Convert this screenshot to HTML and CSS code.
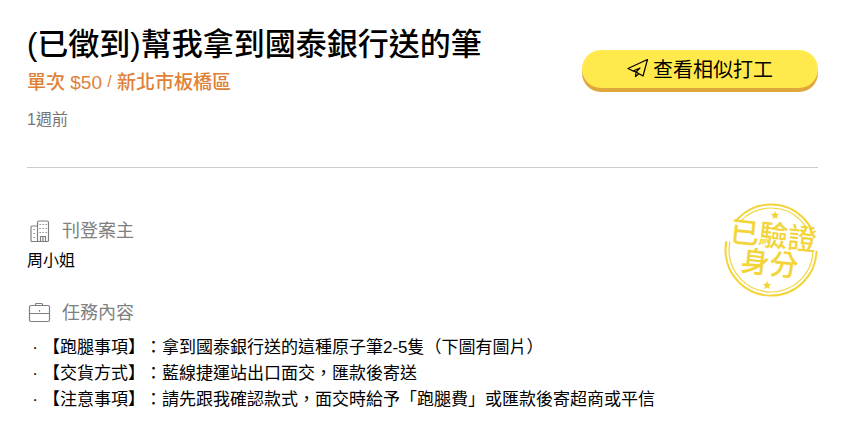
FILE: index.html
```html
<!DOCTYPE html>
<html lang="zh-Hant">
<head>
    <meta charset="UTF-8">
    <meta name="viewport" content="width=device-width, initial-scale=1.0">
    <title>幫我拿到國泰銀行送的筆</title>
    <link rel="stylesheet" href="styles.css">
</head>
<body>
    <main class="job">
        <header class="job-header">
            <div class="job-info">
                <h1>(已徵到)幫我拿到國泰銀行送的筆</h1>
                <p class="job-meta">單次 $50 <span class="slash">/</span> 新北市板橋區</p>
                <p class="job-time">1週前</p>
            </div>
            <button type="button" class="similar-btn">
                <svg width="22" height="20" viewBox="0 0 22 20" fill="none" stroke="currentColor" stroke-width="1.2" stroke-linejoin="round">
                    <path d="M20.500 1.500 1 10.500l5 2.500 7-3-4 4 7 4zM6 13l3 1-.5 4.500 3-2.500"/>
                </svg>
                查看相似打工
            </button>
        </header>

        <div class="job-body">
            <div class="sections">
                <section>
                    <h2>
                        <svg width="24" height="24" viewBox="0 0 24 24" fill="none" stroke="currentColor" stroke-width="1.2">
                            <path d="M10.500 22.500H5a1 1 0 0 1-1-1V8a1 1 0 0 1 1-1h5.500M10.500 22.500V3.500a1.500 1.500 0 0 1 1.500-1.500h8a1.500 1.500 0 0 1 1.500 1.500v18a1 1 0 0 1-1 1zM13.500 22.500v-5h5v5M16 17.500v5"/>
                            <path d="M12.500 5.500h1.300M15.500 5.500h1.300M18.500 5.500h1.300M12.500 9.500h1.300M15.500 9.500h1.300M18.500 9.500h1.300M12.500 13.500h1.300M15.500 13.500h1.300M18.500 13.500h1.300M6.500 10.500h1.300M6.500 14.500h1.300M6.500 18.500h1.300"/>
                        </svg>
                        刊登案主
                    </h2>
                    <p class="owner">周小姐</p>
                </section>
                <section>
                    <h2>
                        <svg width="24" height="24" viewBox="0 0 24 24" fill="none" stroke="currentColor" stroke-width="1.2">
                            <rect x="2.500" y="4.500" width="20" height="16" rx="1.500"/>
                            <path d="M8.500 4.500V3.500a1 1 0 0 1 1-1h5a1 1 0 0 1 1 1v1M2.500 12.500h20M12.500 9v1.800"/>
                        </svg>
                        任務內容
                    </h2>
                    <ul class="tasks">
                        <li>【跑腿事項】：拿到國泰銀行送的這種原子筆2-5隻（下圖有圖片）</li>
                        <li>【交貨方式】：藍線捷運站出口面交，匯款後寄送</li>
                        <li>【注意事項】：請先跟我確認款式，面交時給予「跑腿費」或匯款後寄超商或平信</li>
                    </ul>
                </section>
            </div>

            <svg class="verified" width="94" height="94" viewBox="0 0 94 94" role="img" aria-label="已驗證身分">
                <g fill="none" stroke="currentColor">
                    <circle cx="47" cy="47" r="45.500" stroke-width="2"/>
                    <circle cx="47" cy="47" r="42" stroke-width="1.200"/>
                </g>
                <g transform="rotate(6 47 47)">
                    <path class="text-gap" d="M0 21h94v22H0z"/>
                    <text x="48" y="43">已驗證</text>
                    <text x="47" y="71">身分</text>
                </g>
                <path fill="currentColor" d="m51 8 1.200 2.700 3 .3-2.200 2 .6 3L51 14.500 48.400 16l.6-3-2.200-2 3-.3zM43 78l1.200 2.700 3 .3-2.200 2 .6 3-2.600-1.500-2.600 1.500.6-3-2.200-2 3-.3z"/>
            </svg>
        </div>
    </main>
</body>
</html>
```
FILE: styles.css
```css
* {
    box-sizing: border-box;
}
body {
    margin: 0;
    background: #fff;
    color: #000;
    font-family: "Liberation Sans", "Noto Sans CJK TC", sans-serif;
    font-size: 16px;
    text-spacing-trim: space-all;
}
h1, h2, p, ul {
    margin: 0;
    padding: 0;
}
.job {
    padding: 24px 27px;
}
.job-header {
    display: flex;
    justify-content: space-between;
    align-items: flex-start;
    padding-bottom: 34px;
    border-bottom: 1px solid #ccc;
}
h1 {
    font-size: 31px;
    line-height: 42px;
    font-weight: 500;
}
.job-meta {
    color: #e08138;
    font-size: 19px;
    line-height: 32px;
    font-weight: 500;
}
.slash {
    font-size: 16px;
    vertical-align: 2px;
}
.job-time {
    margin-top: 8px;
    color: #757575;
    line-height: 26px;
}
.similar-btn {
    display: flex;
    align-items: center;
    justify-content: center;
    gap: 4px;
    width: 236px;
    height: 38px;
    margin-top: 26px;
    padding: 0 0 2px;
    border: none;
    border-radius: 20px;
    background: #ffe94d;
    box-shadow: 0 4px 0 #e0a73c;
    color: #000;
    font-family: inherit;
    font-size: 20px;
    cursor: pointer;
}
.job-body {
    display: flex;
    justify-content: space-between;
    align-items: flex-start;
    padding-top: 35px;
}
.sections {
    display: flex;
    flex-direction: column;
    gap: 22px;
    margin-top: 14px;
}
h2 {
    display: flex;
    align-items: center;
    gap: 11px;
    color: #808080;
    font-size: 18px;
    line-height: 28px;
    font-weight: 400;
}
.owner {
    line-height: 32px;
}
.tasks {
    list-style: none;
    margin-top: 8px;
    font-size: 17px;
    line-height: 26px;
}
.tasks li::before {
    content: "·";
    display: inline-block;
    width: 16px;
    text-align: center;
}
.verified {
    flex-shrink: 0;
    margin-left: -94px;
    color: #f3d43a;
}
.verified text {
    fill: currentColor;
    font-size: 29px;
    font-weight: 500;
    text-anchor: middle;
}
.text-gap {
    fill: #fff;
}
```
